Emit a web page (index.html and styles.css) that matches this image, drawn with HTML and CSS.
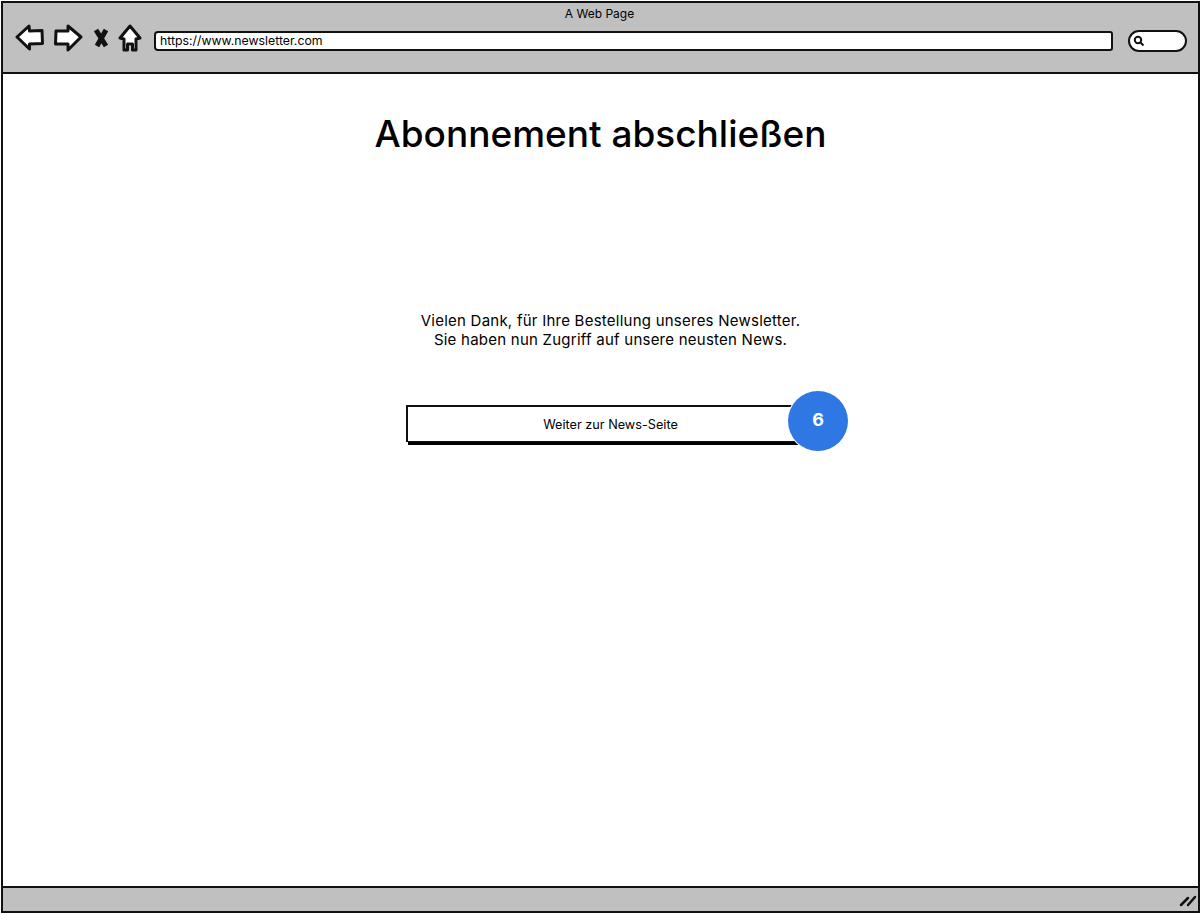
FILE: index.html
```html
<!DOCTYPE html>
<html lang="en">
<head>
  <meta charset="UTF-8" />
  <meta name="viewport" content="width=device-width, initial-scale=1.0"/>
  <title>A Web Page</title>
  <link rel="stylesheet" href="styles.css">
</head>
<body>
  <div class="browser">
    <header class="toolbar">
      <div class="page-title">A Web Page</div>
      <div class="controls">
        <svg class="icon icon-back" viewBox="0 0 30 28">
          <path d="M2 13 L14 2 L14.500 7 L27 6.500 L27.500 19.500 L14.500 20 L14.500 25 Z"/>
        </svg>
        <svg class="icon icon-forward" viewBox="0 0 30 28">
          <path d="M28 13 L15 2 L15 7 L3 7 L2.500 20 L15 20 L15 26 Z"/>
        </svg>
        <svg class="icon icon-stop" viewBox="0 0 16 20">
          <path d="M3 2 L13 18 M13 2 L4 18"/>
        </svg>
        <svg class="icon icon-home" viewBox="0 0 24 28">
          <path d="M12 2 L22 14 L18 15 L18 26 L14.500 26 L14.500 20 L9.500 20 L9.500 26 L6 26 L6 15 L2 14 Z"/>
        </svg>
        <div class="address">https://www.newsletter.com</div>
        <div class="search">
          <svg class="icon-search" viewBox="0 0 12 12">
            <circle cx="5" cy="5" r="3.200"/>
            <path d="M7.500 7.500 L10.500 10.500"/>
          </svg>
        </div>
      </div>
    </header>

    <main class="content">
      <h1>Abonnement abschließen</h1>
      <div class="panel">
        <p class="thanks">Vielen Dank, für Ihre Bestellung unseres Newsletter.<br>Sie haben nun Zugriff auf unsere neusten News.</p>
        <div class="button-wrap">
          <button class="next">Weiter zur News-Seite</button>
          <span class="badge">6</span>
        </div>
      </div>
    </main>

    <footer class="statusbar">
      <svg class="grip" viewBox="0 0 18 14">
        <path d="M2 12 L9 5 M9 12 L16 4"/>
      </svg>
    </footer>
  </div>
</body>
</html>
```

FILE: styles.css
```css
* { box-sizing: border-box; }
body { margin: 0; background: white; color: black; font-family: Inter, "Noto Sans", sans-serif; }

.browser { height: 912px; width: 1199px; margin: 1px 0 0 1px; border: 2px solid #111; display: flex; flex-direction: column; }

.toolbar { height: 71px; background: #c0c0c0; border-bottom: 2px solid #111; padding-top: 3px; }
.page-title { text-align: center; font-size: 12px; line-height: 16px; margin-left: -2px; }
.controls { display: flex; align-items: center; padding-left: 12px; margin-top: 5px; height: 28px; }

.icon { display: block; margin-bottom: 7px; fill: white; stroke: #111; stroke-width: 3; stroke-linejoin: round; stroke-linecap: round; }
.icon-back { width: 30px; height: 28px; }
.icon-forward { width: 30px; height: 28px; margin-left: 8px; }
.icon-stop { width: 16px; height: 20px; margin-left: 10px; fill: none; stroke-width: 5; stroke-linecap: butt; }
.icon-home { width: 24px; height: 28px; margin-left: 9px; }

.address { width: 959px; height: 20px; margin-left: 12px; background: white; border: 2px solid #111; border-radius: 4px 3px 3px 4px; font-size: 12.3px; line-height: 15px; padding-left: 4px; }
.search { width: 59px; height: 22px; margin-left: 15px; background: white; border: 2px solid #111; border-radius: 11px; padding: 3px 0 0 3px; }
.icon-search { display: block; width: 12px; height: 12px; fill: none; stroke: #111; stroke-width: 2; }

.content { flex: 1; background: white; }
h1 { margin: 36px 0 0; text-align: center; font-size: 37px; line-height: 48px; font-weight: 500; }

.panel { width: 409px; margin: 153px 0 0 403px; }
.thanks { margin: 0; text-align: center; font-size: 15px; line-height: 19px; font-weight: 400; letter-spacing: 0.24px; }

.button-wrap { position: relative; margin-top: 56px; }
.next { display: block; width: 100%; height: 37px; padding: 0 2px 0 0; background: white; color: black; border: 2px solid #111; border-right-width: 0; border-bottom-width: 1px; box-shadow: 2px 3px 0 #000; font-family: inherit; font-size: 12.7px; }
.badge { position: absolute; top: -14px; left: 382px; width: 60px; height: 60px; border-radius: 50%; background: #2f78e4; color: white; font-size: 18px; font-weight: 700; line-height: 58px; text-align: center; box-shadow: 0 0 0 1px white; }

.statusbar { height: 25px; background: #c0c0c0; border-top: 2px solid #111; display: flex; justify-content: flex-end; align-items: center; padding-right: 1px; }
.grip { width: 18px; height: 14px; fill: none; stroke: #111; stroke-width: 2.5; stroke-linecap: round; }
```
